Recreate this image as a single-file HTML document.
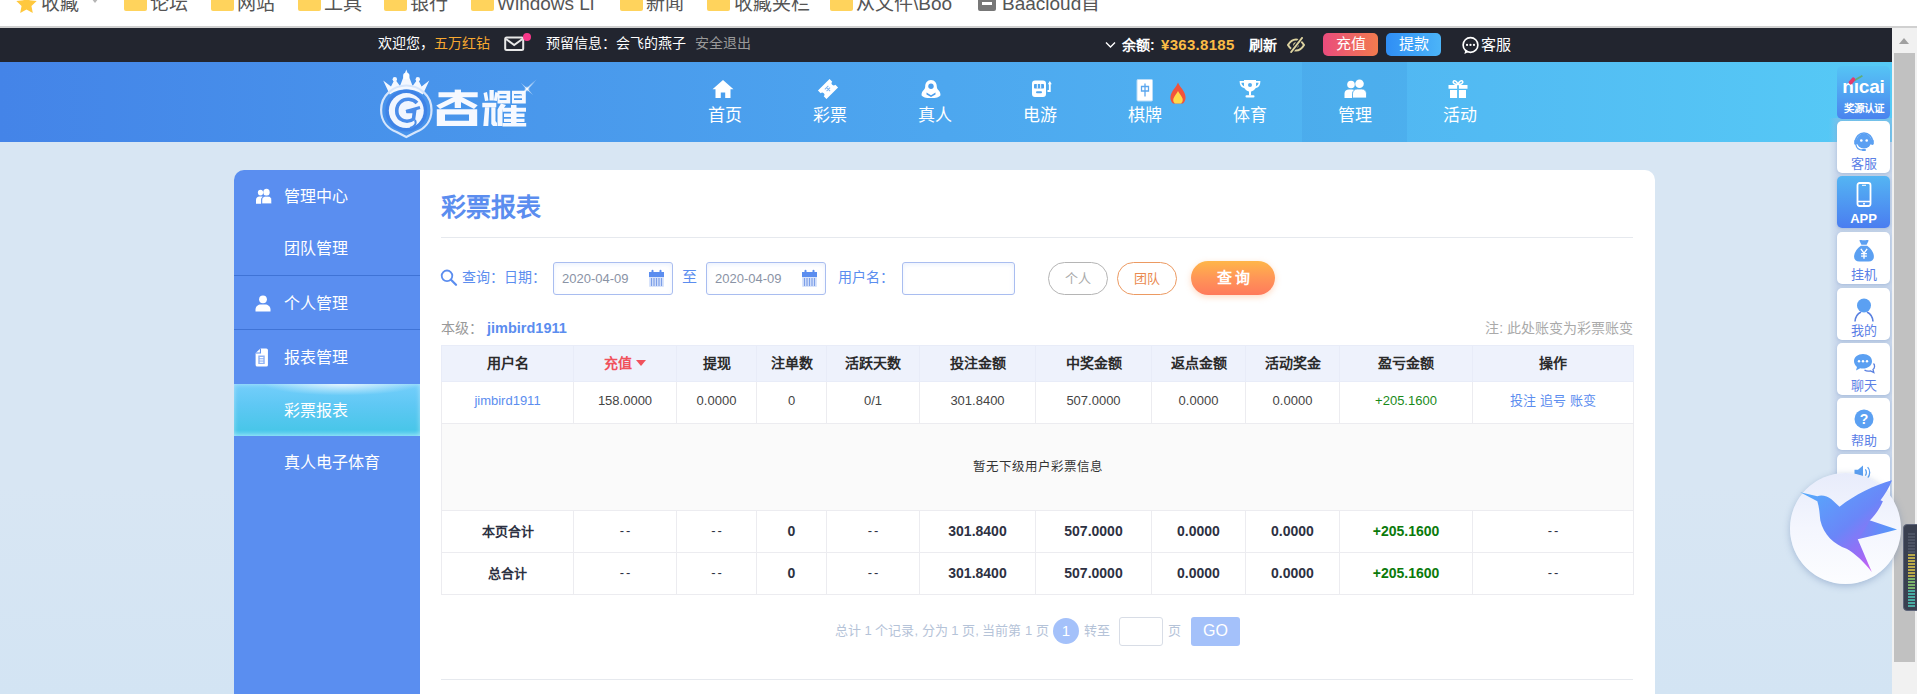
<!DOCTYPE html>
<html lang="zh-CN">
<head>
<meta charset="utf-8">
<title>彩票报表</title>
<style>
*{box-sizing:border-box;margin:0;padding:0}
html,body{width:1917px;height:694px;overflow:hidden}
body{font-family:"Liberation Sans",sans-serif;background:linear-gradient(180deg,#d8e6f3 0%,#d8e6f3 70%,#d3e4f3 100%);position:relative;color:#333}
.abs{position:absolute}
/* bookmark bar */
#bm{position:absolute;left:0;top:0;width:1917px;height:28px;background:#fff;border-bottom:2px solid #d0d0d0;overflow:hidden}
#bm .it{position:absolute;top:-9px;margin-left:-1px;font-size:19px;color:#555;white-space:nowrap;line-height:26px}
#bm .fd{position:absolute;top:-6px;width:23px;height:17px;background:#ffd35c;border-radius:2px}
/* dark bar */
#top{position:absolute;left:0;top:28px;width:1892px;height:34px;background:#22252f;color:#fff;font-size:14px;line-height:34px;white-space:nowrap}
#top span,#top b{position:absolute;top:-2px}
/* nav */
#nav{position:absolute;left:0;top:62px;width:1892px;height:80px;background:linear-gradient(90deg,#4484e8 0%,#56caf6 100%)}
#nav .mi{position:absolute;top:0;width:105px;height:80px;text-align:center;color:#fff;font-size:17px}
#nav .mi.on{background:rgba(40,110,200,.11)}
#nav .mi svg{position:absolute;left:50%;top:17px;margin-left:-12px}
#nav .mi em{position:absolute;left:0;width:105px;top:43px;font-style:normal;line-height:22px}
/* sidebar */
#side{position:absolute;left:234px;top:170px;width:186px;height:524px;background:#5a8ef0;border-radius:10px 0 0 0;color:#fff;font-size:16px}
#side .t{position:absolute;left:50px;line-height:24px;white-space:nowrap}
#side .sep{position:absolute;left:0;width:186px;height:1px;background:#3f73d6}
#side .act{position:absolute;left:0;top:214px;width:186px;height:52px;background:radial-gradient(ellipse 42% 22% at 58% 0%,rgba(255,255,255,.75),rgba(255,255,255,0)),linear-gradient(180deg,#74cefb 0%,#5fc8f4 40%,#49c6e9 88%,#6ad6f3 100%);box-shadow:inset 0 0 5px rgba(255,255,255,.45)}
/* main */
#main{position:absolute;left:420px;top:170px;width:1235px;height:524px;background:#fff;border-radius:0 10px 0 0}
#main h1{position:absolute;left:21px;top:21px;font-size:25px;line-height:32px;color:#5b8def;font-weight:bold}
.hr{position:absolute;left:21px;width:1192px;height:1px;background:#e6e9ee}
.lbl{position:absolute;font-size:14px;color:#5b8def;line-height:20px;white-space:nowrap}
.inp{position:absolute;height:33px;border:1px solid #a9bdf0;box-shadow:inset 0 2px 4px rgba(190,210,250,.3);border-radius:3px;background:#fff;font-size:13px;color:#8a93a5;line-height:31px;padding-left:8px}
.pill{position:absolute;top:92px;width:60px;height:33px;border-radius:17px;border:1px solid #b5b5b5;color:#aaa;font-size:13px;line-height:31px;text-align:center;background:#fff}
table{position:absolute;left:21px;top:175px;width:1192px;border-collapse:collapse;table-layout:fixed;font-size:13px;color:#333}
td,th{border:1px solid #ececf0;text-align:center;padding:0;white-space:nowrap;overflow:hidden}
th{height:36px;background:#eef2fc;font-weight:bold;color:#2b2b2b;border-color:#e8ecf8;font-size:14px;padding-bottom:3px}
tr.r td{height:42px;padding-bottom:4px;color:#444}
tr.e td{height:87px;background:#fafafa;padding-bottom:4px}
tr.s td{font-weight:bold;color:#2d3142;padding-bottom:2px}
tr.s td.n{font-size:14px}
tr.r td.g{color:#1a8a1a}
tr.r.s td.g{color:#0b7a0b}
.dd{letter-spacing:2px;font-weight:normal;padding-left:2px}
a{color:#5b8def;text-decoration:none}
.tri{display:inline-block;width:0;height:0;border:5px solid transparent;border-top:6px solid #f0525c;border-bottom:0;vertical-align:middle;margin-left:1px;margin-top:-2px}
/* right tools */
.tool{position:absolute;left:1837px;width:53px;height:52px;background:#fff;border-radius:5px;text-align:center;font-size:13px;color:#5b80e6;box-shadow:0 1px 3px rgba(80,120,180,.25)}
.tool em{position:absolute;left:0;width:53px;bottom:2px;font-style:normal;line-height:14px}
.tool svg{position:absolute;left:50%;top:10px;margin-left:-11px}
.tool.b{background:linear-gradient(180deg,#54b5f3,#4a7df0);color:#fff;font-weight:bold}
/* scrollbar */
#sb{position:absolute;left:1892px;top:28px;width:25px;height:666px;background:#f1f1f1}
#sb .th{position:absolute;left:2px;top:25px;width:21px;height:609px;background:#c1c1c1}
</style>
</head>
<body>
<div id="bm"><svg class="abs" style="left:16px;top:-7px" width="21" height="21" viewBox="0 0 20 20"><path d="M10 0.5l2.9 6.3 6.8.8-5 4.7 1.3 6.8-6-3.4-6 3.4 1.3-6.8-5-4.7 6.8-.8z" fill="#ffc83d"/></svg><div class="it" style="left:42px">收藏</div><div class="abs" style="left:91px;top:-2px;width:0;height:0;border:4px solid transparent;border-top:5px solid #b5b5b5"></div><div class="fd" style="left:124px"></div><div class="it" style="left:151px">论坛</div><div class="fd" style="left:211px"></div><div class="it" style="left:238px">网站</div><div class="fd" style="left:298px"></div><div class="it" style="left:325px">工具</div><div class="fd" style="left:384px"></div><div class="it" style="left:411px">银行</div><div class="fd" style="left:471px"></div><div class="it" style="left:498px">Windows Li</div><div class="fd" style="left:620px"></div><div class="it" style="left:647px">新闻</div><div class="fd" style="left:707px"></div><div class="it" style="left:735px">收藏夹栏</div><div class="fd" style="left:830px"></div><div class="it" style="left:857px">从文件\Boo</div><div class="abs" style="left:978px;top:-6px;width:18px;height:17px;background:#777;border-radius:2px"><div class="abs" style="left:4px;top:8px;width:10px;height:3px;background:#fff"></div></div><div class="it" style="left:1003px">Baacloud首</div></div>
<div id="top"><span style="left:378px">欢迎您，</span><span style="left:434px;color:#f8a830">五万红钻</span><svg class="abs" style="left:504px;top:8px" width="22" height="16" viewBox="0 0 22 16"><rect x="1.2" y="1.5" width="18" height="12.5" rx="1.5" fill="none" stroke="#e8e8e8" stroke-width="2"/><path d="M2 3l8.2 6 8.2-6" fill="none" stroke="#e8e8e8" stroke-width="2"/></svg><div class="abs" style="left:522.500px;top:5px;width:8px;height:8px;border-radius:50%;background:#f8388a"></div><span style="left:546px">预留信息：</span><span style="left:616px">会飞的燕子</span><span style="left:695px;color:#9a9a9a">安全退出</span><svg class="abs" style="left:1105px;top:13px" width="11" height="8" viewBox="0 0 11 8"><path d="M1 1.5l4.5 4.5 4.5-4.5" fill="none" stroke="#fff" stroke-width="1.4"/></svg><b style="left:1122px;top:0">余额:</b><b style="left:1161px;top:0;color:#fbbc45;font-size:15px;letter-spacing:.3px">¥363.8185</b><b style="left:1249px;top:0">刷新</b><svg class="abs" style="left:1287px;top:9px" width="18" height="16" viewBox="0 0 18 16"><path d="M1 8c2.500-4.300 5.500-5.600 8-5.600s5.500 1.300 8 5.600c-2.500 4.300-5.500 5.600-8 5.600S3.500 12.300 1 8z" fill="none" stroke="#ddd3a0" stroke-width="2"/><circle cx="9" cy="8" r="2.800" fill="#ddd3a0"/><path d="M14.800 0.800L4 15.200" stroke="#22252f" stroke-width="4"/><path d="M15 1L4.200 15" stroke="#ddd3a0" stroke-width="2" stroke-linecap="round"/></svg><div class="abs" style="left:1323px;top:5px;width:55px;height:23px;border-radius:5px;background:linear-gradient(90deg,#ea4c7d,#f27b4e);text-align:center;line-height:21px;font-size:15px;color:#fff">充值</div><div class="abs" style="left:1386px;top:5px;width:55px;height:23px;border-radius:5px;background:linear-gradient(90deg,#2f8ef5,#4cb4f8);text-align:center;line-height:21px;font-size:15px;color:#fff">提款</div><svg class="abs" style="left:1461px;top:8px" width="19" height="19" viewBox="0 0 17 17"><circle cx="8.5" cy="8" r="6.6" fill="none" stroke="#fff" stroke-width="1.5"/><circle cx="5.4" cy="8" r="1" fill="#fff"/><circle cx="8.5" cy="8" r="1" fill="#fff"/><circle cx="11.6" cy="8" r="1" fill="#fff"/><path d="M7 14l-4 2 1-4z" fill="#fff"/></svg><span style="left:1481px;top:0;font-size:15px">客服</span></div>
<div id="nav"><svg class="abs" style="left:370px;top:0" width="180" height="80" viewBox="0 0 180 80">
<defs><radialGradient id="lg1" cx=".5" cy=".5" r=".5"><stop offset="0" stop-color="#fff" stop-opacity=".9"/><stop offset="1" stop-color="#fff" stop-opacity="0"/></radialGradient></defs>
<!-- crown -->
<path d="M13.200 18.400 L21 24.500 L24.800 17 L30 24 L36.300 7.500 L42.600 24 L47.800 17 L51.600 24.500 L59.300 18.400 L52.800 32.500 C47 28.500 42 27.500 36.300 27.500 C30.600 27.500 25.600 28.500 19.800 32.500 Z" fill="#f4f8ff"/>
<circle cx="24.800" cy="17.300" r="2.200" fill="#f4f8ff"/><circle cx="47.800" cy="17.300" r="2.200" fill="#f4f8ff"/><circle cx="36.300" cy="14" r="3.200" fill="#fff"/>
<!-- ring -->
<path d="M36.300 23.500 C49 23.500 61.500 33 61.500 48 C61.500 60 54 67 46 70 L36.300 75 L26.600 70 C18.600 67 11.100 60 11.100 48 C11.100 33 23.600 23.500 36.300 23.500 Z" fill="none" stroke="#d6e6fc" stroke-width="2.200"/>
<circle cx="36.300" cy="48.600" r="21" fill="#3f83e6"/>
<circle cx="36.300" cy="48.600" r="17.500" fill="#f1f6ff"/>
<!-- G swirl -->
<path d="M47 41 C43 36.500 35 36 30.500 40 C25.500 44.500 25.500 53 30.500 57 C34 60 40 60 43.500 57 L44.500 49.500 L36.500 49.500" fill="none" stroke="#4a8ce9" stroke-width="3.600"/>
<path d="M36 49.500 L50 45.500" stroke="#4a8ce9" stroke-width="3"/>
<path d="M45 58 C47 62 44 65 40 66" fill="none" stroke="#4a8ce9" stroke-width="2"/>
<!-- text 杏 -->
<g fill="#f6f9ff" transform="translate(0,0)">
<path d="M68.500 30.200 H107.700 V35.200 H68.500 Z"/>
<path d="M84.700 27.600 H91 V46 H84.700 Z"/>
<path d="M85.500 34 L90.500 37 L70 47 L66.300 43.500 Z"/>
<path d="M90 34 L86 37.500 L104 47 L107.700 43.200 Z"/>
<path d="M66.800 47.200 H107.200 V64 H66.800 Z M75 52.500 V58.700 H99 V52.500 Z" fill-rule="evenodd"/>
<!-- text 耀 left 光 -->
<path d="M119.500 28 H123.800 V38.500 H119.500 Z M113.500 31 L117 30 L118.500 38.500 L115 39 Z M125.300 30 L128.800 31 L126.800 39 L123.800 38.500 Z"/>
<path d="M112.300 40.800 H126.300 V45.300 H112.300 Z"/>
<path d="M115 45.300 H119.300 L118.300 64 H113.300 Z M121.300 45.300 H125.500 V59 L127 61 V64 H123 L121.300 62 Z"/>
<!-- right top two 习 -->
<path d="M127.500 28.800 H140.200 V41.500 H127.500 Z M129.500 32 H136.500 V33.600 H129.500 Z M129.500 36.300 H136.500 V38 H129.500 Z" fill-rule="evenodd"/>
<path d="M142 28.800 H155.800 V41.500 H142 Z M144 32 H152 V33.600 H144 Z M144 36.300 H152 V38 H144 Z" fill-rule="evenodd"/>
<!-- right bottom 隹 -->
<path d="M131 41.500 L136 43 L132.500 48 V64 H127.500 V47.500 Z"/>
<path d="M132.500 45.800 H156 V49.800 H132.500 Z M134 51.600 H154.500 V55 H134 Z M134 56.800 H154.500 V60 H134 Z M132.500 61 H156.200 V64.500 H132.500 Z"/>
<path d="M141 43 H146.500 V63 H141 Z"/>
</g>
<!-- sparkle -->
<ellipse cx="157" cy="27" rx="14" ry="1.300" fill="url(#lg1)" transform="rotate(-45 157 27)"/>
<ellipse cx="157" cy="27" rx="9" ry="1" fill="url(#lg1)" transform="rotate(45 157 27)"/>
<circle cx="157" cy="27" r="3" fill="url(#lg1)"/>
</svg><div class="mi" style="left:672px"><svg width="24" height="20" style="margin-left:-14.0px" viewBox="0 0 24 20"><path d="M12 1L1.5 10.2h3V19h5.3v-5.6h4.4V19h5.3v-8.8h3z" fill="#fff"/></svg><em>首页</em></div><div class="mi" style="left:777px"><svg width="24" height="20" style="margin-left:-13.5px" viewBox="0 0 24 20"><g transform="rotate(-45 12 10)"><path d="M3.800 4h16.400v3.800a2.200 2.200 0 000 4.400v3.800h-16.400v-3.800a2.200 2.200 0 000-4.400z" fill="#fff"/><path d="M9.5 8h5M9.5 10.5h5M12 8v5" stroke="#7cb4f3" stroke-width="1" fill="none"/></g></svg><em>彩票</em></div><div class="mi" style="left:882px"><svg width="24" height="20" style="margin-left:-16.0px" viewBox="0 0 24 20"><path d="M12 1c-3.8 0-5.8 3-5.8 6.4 0 1.5-.6 2.6-1.5 3.6-1.2 1.2-2.2 2.7-2.2 5.2 1.5 2 4 2.8 9.5 2.8s8-.8 9.500-2.800c0-2.500-1-4-2.200-5.200-.9-1-1.500-2.100-1.500-3.600C17.800 4 15.800 1 12 1z" fill="#fff"/><circle cx="12" cy="7.300" r="2.700" fill="#4c9eed"/><path d="M7.500 13.500l4.500 2.800 4.500-2.800v2l-4.500 2.600-4.500-2.600z" fill="#4c9eed"/></svg><em>真人</em></div><div class="mi" style="left:987px"><svg width="26" height="20" style="margin-left:-11.0px" viewBox="0 0 26 20"><path d="M3 4.500a3 3 0 013-3h8a3 3 0 013 3v10.500a3 3 0 01-3 3H6a3 3 0 01-3-3z" fill="#fff"/><rect x="5" y="5" width="10" height="4.600" rx=".8" fill="#4fa4ee"/><path d="M8.300 5v4.600M11.700 5v4.600" stroke="#fff" stroke-width="1"/><rect x="7" y="12.300" width="6" height="2" rx="1" fill="#4fa4ee"/><path d="M18.500 12h2.300V4.500" stroke="#fff" stroke-width="1.800" fill="none"/><path d="M18.800 5.200l2-3.200 2 3.200z" fill="#fff"/></svg><em>电游</em></div><div class="mi" style="left:1092px"><svg width="24" height="24" viewBox="0 0 24 24"><rect x="4" y="0.500" width="15.500" height="21.500" rx="1" fill="#fff" stroke="#b8dcf8" stroke-width="1"/><path d="M8.500 7.500h7v4.500h-7zM12 4.500v13" stroke="#5aa6ee" stroke-width="1.300" fill="none"/></svg><em>棋牌</em></div><div class="mi" style="left:1197px"><svg width="24" height="20" viewBox="0 0 24 20"><path d="M6 1h12v5.500c0 3.500-2.600 6-6 6s-6-2.500-6-6z" fill="#fff"/><path d="M6.200 2.800H2.500c0 3.200 1.500 5.200 4.500 5.700M17.800 2.800h3.700c0 3.200-1.500 5.200-4.500 5.700" stroke="#fff" stroke-width="1.700" fill="none"/><circle cx="12" cy="6" r="2" fill="#55adf0"/><path d="M11 12h2v4.500h-2z" fill="#fff"/><rect x="7.500" y="16.300" width="9" height="2.200" rx="1" fill="#fff"/></svg><em>体育</em></div><div class="mi on" style="left:1302px"><svg width="26" height="20" viewBox="0 0 26 20"><circle cx="8" cy="5.500" r="3.800" fill="#fff"/><path d="M1.500 19v-4.500c0-2.500 2-4 4.500-4h3c1 0 1.700.2 2.300.6-1.500 1.200-2 2.600-2 4.400V19z" fill="#fff"/><circle cx="16.500" cy="4.800" r="4.300" fill="#fff"/><path d="M9.500 19v-4.200c0-2.800 2-4.800 5-4.800h4c3 0 5 2 5 4.800V19z" fill="#fff" stroke="#4da9ea" stroke-width=".8"/></svg><em>管理</em></div><div class="mi" style="left:1407px"><svg width="24" height="20" style="margin-left:-14.0px" viewBox="0 0 24 20"><path d="M2.500 6h19v3.800h-19zM4 11h16v8H4z" fill="#fff"/><path d="M12 5.500v14" stroke="#54bdf4" stroke-width="1.800"/><path d="M12 5.500C9 5.800 6.500 4 7.300 2.300 8.300.7 11 2.300 12 5.500zM12 5.500c3 .3 5.500-1.500 4.700-3.200C15.700.7 13 2.300 12 5.500z" fill="none" stroke="#fff" stroke-width="1.500"/></svg><em>活动</em></div><svg class="abs" style="left:1168px;top:20px" width="20" height="23" viewBox="0 0 20 23"><path d="M10 0.500c1 3 4 5.500 6 9.500 2 4 2.500 8-1 11.500H5C1.500 18 2 14 4 10c1.500-3 4.500-5.500 6-9.500z" fill="#f2533b"/><path d="M10 9c1 2.500 3.500 4.500 4.500 7.500.7 2-.2 4-1.500 5H7c-1.500-1-2.200-3-1.500-5C6.500 13.500 9 11.500 10 9z" fill="#ffd94a"/></svg></div>
<div id="side"><div class="act"></div><div class="sep" style="top:105px"></div><div class="sep" style="top:159px"></div><div class="t" style="top:15px">管理中心</div><div class="t" style="top:67px">团队管理</div><div class="t" style="top:122px">个人管理</div><div class="t" style="top:176px">报表管理</div><div class="t" style="top:229px">彩票报表</div><div class="t" style="top:281px">真人电子体育</div><svg class="abs" style="left:21px;top:18px" width="18" height="17.500" viewBox="0 0 18 16" preserveAspectRatio="none"><circle cx="5.500" cy="4.200" r="2.600" fill="#fff"/><path d="M1 14.500V11c0-2 1.500-3.200 3.300-3.200h2c.5 0 1 .1 1.400.3C6.500 9 6 10.200 6 11.500v3z" fill="#fff"/><circle cx="11.500" cy="3.800" r="3.200" fill="#fff"/><path d="M6.800 14.500V11c0-2.200 1.700-3.500 3.700-3.500h2.500c2 0 3.700 1.300 3.700 3.500v3.500z" fill="#fff" stroke="#5a8ef0" stroke-width=".7"/></svg><svg class="abs" style="left:20px;top:124px" width="18" height="18" viewBox="0 0 18 18"><circle cx="9" cy="5.300" r="3.900" fill="#fff"/><path d="M1.500 17.500v-2c0-3 2.500-5 5.500-5h4c3 0 5.500 2 5.500 5v2z" fill="#fff"/></svg><svg class="abs" style="left:20px;top:177px" width="15" height="21" viewBox="0 0 14 21" preserveAspectRatio="none"><path d="M1.500 6L6 1.500h5.500A1.500 1.500 0 0113 3v15a1.500 1.500 0 01-1.500 1.500h-8.500A1.500 1.500 0 011.500 18z" fill="#fff"/><path d="M6 1.500V6H1.500" fill="none" stroke="#5a8ef0" stroke-width="1"/><rect x="4" y="8.500" width="6" height="8.500" fill="#8fb2f5"/><rect x="5.300" y="10" width="3.400" height="1.200" fill="#fff"/><rect x="5.300" y="12.300" width="3.400" height="1.200" fill="#fff"/><rect x="5.300" y="14.600" width="3.400" height="1.200" fill="#fff"/></svg></div>
<div id="main"><h1>彩票报表</h1><div class="hr" style="top:67px"></div><svg class="abs" style="left:20px;top:99px" width="18" height="17" viewBox="0 0 18 17"><circle cx="7" cy="6.800" r="5.300" fill="none" stroke="#5b8def" stroke-width="1.800"/><path d="M11 10.800l5 5" stroke="#5b8def" stroke-width="2.200" stroke-linecap="round"/></svg><div class="lbl" style="left:42px;top:97px">查询：</div><div class="lbl" style="left:84px;top:97px">日期：</div><div class="inp" style="left:133px;top:92px;width:120px">2020-04-09<svg class="abs" style="left:94px;top:6px" width="17" height="19" viewBox="0 0 17 19"><rect x="1" y="3" width="15" height="15" rx="1" fill="#d9e4fb"/><rect x="1" y="3" width="15" height="5" fill="#5b8def"/><rect x="3.500" y="0.800" width="2" height="4" rx="1" fill="#5b8def"/><rect x="11.500" y="0.800" width="2" height="4" rx="1" fill="#5b8def"/><path d="M3.500 9v8M6 9v8M8.500 9v8M11 9v8M13.500 9v8" stroke="#7c9fe8" stroke-width="1.200"/></svg></div><div class="lbl" style="left:262px;top:97px;font-size:15px">至</div><div class="inp" style="left:286px;top:92px;width:120px">2020-04-09<svg class="abs" style="left:94px;top:6px" width="17" height="19" viewBox="0 0 17 19"><rect x="1" y="3" width="15" height="15" rx="1" fill="#d9e4fb"/><rect x="1" y="3" width="15" height="5" fill="#5b8def"/><rect x="3.500" y="0.800" width="2" height="4" rx="1" fill="#5b8def"/><rect x="11.500" y="0.800" width="2" height="4" rx="1" fill="#5b8def"/><path d="M3.500 9v8M6 9v8M8.500 9v8M11 9v8M13.500 9v8" stroke="#7c9fe8" stroke-width="1.200"/></svg></div><div class="lbl" style="left:418px;top:97px">用户名：</div><div class="inp" style="left:482px;top:92px;width:113px"></div><div class="pill" style="left:628px">个人</div><div class="pill" style="left:697px;border-color:#ec9a62;color:#ea8a50">团队</div><div class="abs" style="left:771px;top:91px;width:84px;height:34px;border-radius:17px;background:linear-gradient(180deg,#ffb649 0%,#ff9557 50%,#ff7a5c 100%);box-shadow:0 2px 6px rgba(255,150,80,.35);color:#fff;font-weight:bold;font-size:15px;line-height:34px;text-align:center;letter-spacing:3px;padding-left:3px">查询</div><div class="lbl" style="left:21px;top:148px;color:#999">本级：</div><div class="lbl" style="left:67px;top:148px;font-weight:bold;font-size:14.500px">jimbird1911</div><div class="lbl" style="right:22px;top:148px;color:#aaa;font-size:14px">注: 此处账变为彩票账变</div><table><colgroup><col style="width:132px"><col style="width:103px"><col style="width:80px"><col style="width:70px"><col style="width:93px"><col style="width:116px"><col style="width:116px"><col style="width:94px"><col style="width:94px"><col style="width:133px"><col style="width:161px"></colgroup><tr><th>用户名</th><th><span style="color:#f0525c">充值 <i class="tri"></i></span></th><th>提现</th><th>注单数</th><th>活跃天数</th><th>投注金额</th><th>中奖金额</th><th>返点金额</th><th>活动奖金</th><th>盈亏金额</th><th>操作</th></tr><tr class="r"><td><a>jimbird1911</a></td><td>158.0000</td><td>0.0000</td><td>0</td><td>0/1</td><td>301.8400</td><td>507.0000</td><td>0.0000</td><td>0.0000</td><td class="g">+205.1600</td><td><a style="position:relative;top:-1px">投注 追号 账变</a></td></tr><tr class="e"><td colspan="11" style="font-size:12.500px">暂无下级用户彩票信息</td></tr><tr class="r s"><td>本页合计</td><td><span class="dd">--</span></td><td><span class="dd">--</span></td><td class="n">0</td><td><span class="dd">--</span></td><td class="n">301.8400</td><td class="n">507.0000</td><td class="n">0.0000</td><td class="n">0.0000</td><td class="g n">+205.1600</td><td><span class="dd">--</span></td></tr><tr class="r s"><td>总合计</td><td><span class="dd">--</span></td><td><span class="dd">--</span></td><td class="n">0</td><td><span class="dd">--</span></td><td class="n">301.8400</td><td class="n">507.0000</td><td class="n">0.0000</td><td class="n">0.0000</td><td class="g n">+205.1600</td><td><span class="dd">--</span></td></tr></table><div class="lbl" style="left:415px;top:451px;color:#b5c3d8;font-size:13px">总计 1 个记录, 分为 1 页, 当前第 1 页</div><div class="abs" style="left:633px;top:448px;width:26px;height:26px;border-radius:50%;background:#a4c1fa;color:#fff;font-size:15px;line-height:26px;text-align:center">1</div><div class="lbl" style="left:664px;top:451px;color:#b5c3d8;font-size:13px">转至</div><div class="abs" style="left:699px;top:447px;width:44px;height:28.500px;border:1px solid #d8dde6;border-radius:3px;background:#fff"></div><div class="lbl" style="left:748px;top:451px;color:#b5c3d8;font-size:13px">页</div><div class="abs" style="left:771px;top:447px;width:49px;height:28.500px;border-radius:3px;background:#a4c1fa;color:#fff;font-size:16px;line-height:28px;text-align:center">GO</div><div class="hr" style="top:509px"></div></div>
<div id="sb"><div class="th"></div></div><div class="abs" style="left:1899px;top:38px;width:0;height:0;border:5.500px solid transparent;border-bottom:6px solid #a0a0a0;border-top:0"></div><div class="abs" style="left:1829px;top:118px;width:63px;height:392px;background:linear-gradient(90deg,rgba(170,185,220,0) 0%,rgba(170,185,220,.38) 14%,rgba(170,185,220,.38) 100%)"></div><div class="tool b" style="top:66px;height:53px;background:linear-gradient(180deg,#55c4f5 0%,#52aef3 35%,#4a83ee 100%);box-shadow:none"><div class="abs" style="left:-1px;top:10px;width:55px;font-weight:bold;font-size:19px;line-height:22px;letter-spacing:-.2px;color:#fff">nıcai</div><div class="abs" style="left:17px;top:11px;width:9px;height:2px;background:#5fae7a;transform:rotate(-30deg)"></div><div class="abs" style="left:11px;top:13px;width:8px;height:4px;border-radius:2px;background:#e23a6e;transform:rotate(-50deg)"></div><div class="abs" style="left:0;top:36px;width:53px;font-size:10.500px;font-weight:bold;line-height:13px;color:#fff">奖源认证</div></div><div class="tool" style="top:121px"><svg width="22" height="22" viewBox="0 0 22 22"><circle cx="11" cy="10" r="7.500" fill="#5ba0f2"/><path d="M2.500 10.500a8.500 8.500 0 0117 0" fill="none" stroke="#5ba0f2" stroke-width="1.600"/><rect x="1.200" y="8.500" width="3" height="5.500" rx="1.400" fill="#5ba0f2"/><rect x="17.800" y="8.500" width="3" height="5.500" rx="1.400" fill="#5ba0f2"/><circle cx="8.300" cy="9.500" r="1.300" fill="#fff"/><circle cx="13.700" cy="9.500" r="1.300" fill="#fff"/><path d="M3 14c.5 3.500 3.500 5 7 5" fill="none" stroke="#5ba0f2" stroke-width="1.300"/><rect x="9" y="18" width="4" height="2" rx="1" fill="#5ba0f2"/></svg><em>客服</em></div><div class="tool b" style="top:176px"><svg width="22" height="26" viewBox="0 0 22 26" style="top:6px"><rect x="4.500" y="1" width="13" height="23" rx="2.200" fill="none" stroke="#fff" stroke-width="1.800"/><path d="M4.500 19.500h13" stroke="#fff" stroke-width="1.500"/><path d="M9 3.300h4" stroke="#fff" stroke-width="1"/><circle cx="11" cy="21.800" r="1" fill="#fff"/></svg><em>APP</em></div><div class="tool" style="top:232px"><svg width="24" height="25" viewBox="0 0 22 24" style="top:7px;margin-left:-12px"><path d="M6.500 1.500c1.500-1 3-.2 4.500-.2s3-.8 4.500.2l-2 4h-5z" fill="#5ba0f2"/><path d="M8 6.500h6c3.500 2.500 6.500 6.500 6.500 10.500 0 3-2 4.500-5 4.500h-9c-3 0-5-1.500-5-4.500 0-4 3-8 6.500-10.500z" fill="#5ba0f2"/><path d="M8 9.500l3 4 3-4M11 13.500v5.500M8.200 14h5.600M8.200 16.500h5.600" stroke="#fff" stroke-width="1.300" fill="none"/></svg><em>挂机</em></div><div class="tool" style="top:288px"><svg width="24" height="26" viewBox="0 0 24 26" style="top:9px;margin-left:-12px"><circle cx="12" cy="8.500" r="7" fill="#5ba0f2"/><path d="M3 24.500c.3-5 3-8 6-9.500M21 24.500c-.3-5-3-8-6-9.500" fill="none" stroke="#5a80e0" stroke-width="1.600"/></svg><em>我的</em></div><div class="tool" style="top:343px"><svg width="24" height="22" viewBox="0 0 24 22"><path d="M10 1c5 0 9 3 9 7.300s-4 7.300-9 7.300c-1 0-2-.1-2.800-.4L3 17.500l1-3.500C2.200 12.500 1 10.500 1 8.300 1 4 5 1 10 1z" fill="#5ba0f2"/><circle cx="6" cy="8.300" r="1.200" fill="#fff"/><circle cx="10" cy="8.300" r="1.200" fill="#fff"/><circle cx="14" cy="8.300" r="1.200" fill="#fff"/><path d="M20.500 10.500c1.500 1.500 1.500 4.500-.5 6l.8 3-3.300-1.600c-2 .5-4.500.2-6-1" fill="none" stroke="#5a80e0" stroke-width="1.300"/></svg><em>聊天</em></div><div class="tool" style="top:398px"><svg width="22" height="22" viewBox="0 0 22 22"><circle cx="11" cy="11" r="9.500" fill="#5ba0f2"/><text x="11" y="16" font-family="Liberation Sans" font-weight="bold" font-size="14" fill="#fff" text-anchor="middle">?</text></svg><em>帮助</em></div><div class="tool" style="top:454px"><svg width="22" height="17" viewBox="0 0 26 22" style="margin-left:-12px;top:10px"><path d="M2 7.500h4.500L13 2v18l-6.500-5.500H2z" fill="#5ba0f2"/><path d="M16 7c1.800 2 1.800 6 0 8M19 4c3.500 3.500 3.500 10.500 0 14" fill="none" stroke="#5ba0f2" stroke-width="1.700"/></svg><em></em></div><div class="abs" style="left:1790px;top:472.500px;width:111px;height:111px;border-radius:50%;background:linear-gradient(180deg,#e8ecfb 0%,#f4f6fe 50%,#fcfdff 100%);box-shadow:0 2px 7px rgba(90,120,170,.4)"></div>
<svg class="abs" style="left:1780px;top:460px" width="137" height="140" viewBox="0 0 679 694"><defs><linearGradient id="bg1" gradientUnits="userSpaceOnUse" x1="150" y1="150" x2="470" y2="540"><stop offset="0" stop-color="#57a8fc"/><stop offset="0.500" stop-color="#6a86f8"/><stop offset="0.800" stop-color="#9a6cf6"/><stop offset="1" stop-color="#cf5ef3"/></linearGradient><linearGradient id="bg2" gradientUnits="userSpaceOnUse" x1="400" y1="330" x2="580" y2="350"><stop offset="0" stop-color="#7a7cf7"/><stop offset="1" stop-color="#4f9bfa"/></linearGradient></defs>
<path d="M440,298 L580,345 C520,362 450,377 380,394 Z" fill="url(#bg2)"/>
<path d="M100,160 L185,180 C205,172 235,178 255,195 L295,232 C370,170 470,125 555,100 C540,140 520,170 498,200 L510,205 C495,240 470,275 445,300 C425,335 405,365 385,392 L455,555 C420,510 375,465 330,440 C270,420 215,370 200,300 C196,270 196,240 185,205 Z" fill="url(#bg1)"/></svg><div class="abs" style="left:1903px;top:524px;width:18px;height:87px;border-radius:4px;background:#3a4050;border:1px solid #5d6479"></div><div class="abs" style="left:1908px;top:533px;width:7px;height:2px;background:#4d5464"></div><div class="abs" style="left:1908px;top:536px;width:7px;height:2px;background:#4d5464"></div><div class="abs" style="left:1908px;top:539px;width:7px;height:2px;background:#4d5464"></div><div class="abs" style="left:1908px;top:542px;width:7px;height:2px;background:#4d5464"></div><div class="abs" style="left:1908px;top:545px;width:7px;height:2px;background:#4d5464"></div><div class="abs" style="left:1908px;top:548px;width:7px;height:2px;background:#4d5464"></div><div class="abs" style="left:1908px;top:551px;width:7px;height:2px;background:#4d5464"></div><div class="abs" style="left:1908px;top:554px;width:7px;height:2px;background:#b9a94a"></div><div class="abs" style="left:1908px;top:557px;width:7px;height:2px;background:#b9a94a"></div><div class="abs" style="left:1908px;top:560px;width:7px;height:2px;background:#b9a94a"></div><div class="abs" style="left:1908px;top:563px;width:7px;height:2px;background:#b9a94a"></div><div class="abs" style="left:1908px;top:566px;width:7px;height:2px;background:#b9a94a"></div><div class="abs" style="left:1908px;top:569px;width:7px;height:2px;background:#b9a94a"></div><div class="abs" style="left:1908px;top:572px;width:7px;height:2px;background:#b9a94a"></div><div class="abs" style="left:1908px;top:575px;width:7px;height:2px;background:#b9a94a"></div><div class="abs" style="left:1908px;top:578px;width:7px;height:2px;background:#7cb36c"></div><div class="abs" style="left:1908px;top:581px;width:7px;height:2px;background:#7cb36c"></div><div class="abs" style="left:1908px;top:584px;width:7px;height:2px;background:#7cb36c"></div><div class="abs" style="left:1908px;top:587px;width:7px;height:2px;background:#7cb36c"></div><div class="abs" style="left:1908px;top:590px;width:7px;height:2px;background:#4aaba2"></div><div class="abs" style="left:1908px;top:593px;width:7px;height:2px;background:#4aaba2"></div><div class="abs" style="left:1908px;top:596px;width:7px;height:2px;background:#4aaba2"></div><div class="abs" style="left:1908px;top:599px;width:7px;height:2px;background:#4aaba2"></div><div class="abs" style="left:1908px;top:602px;width:7px;height:2px;background:#4aaba2"></div><div class="abs" style="left:1908px;top:605px;width:7px;height:2px;background:#4aaba2"></div>
</body>
</html>
